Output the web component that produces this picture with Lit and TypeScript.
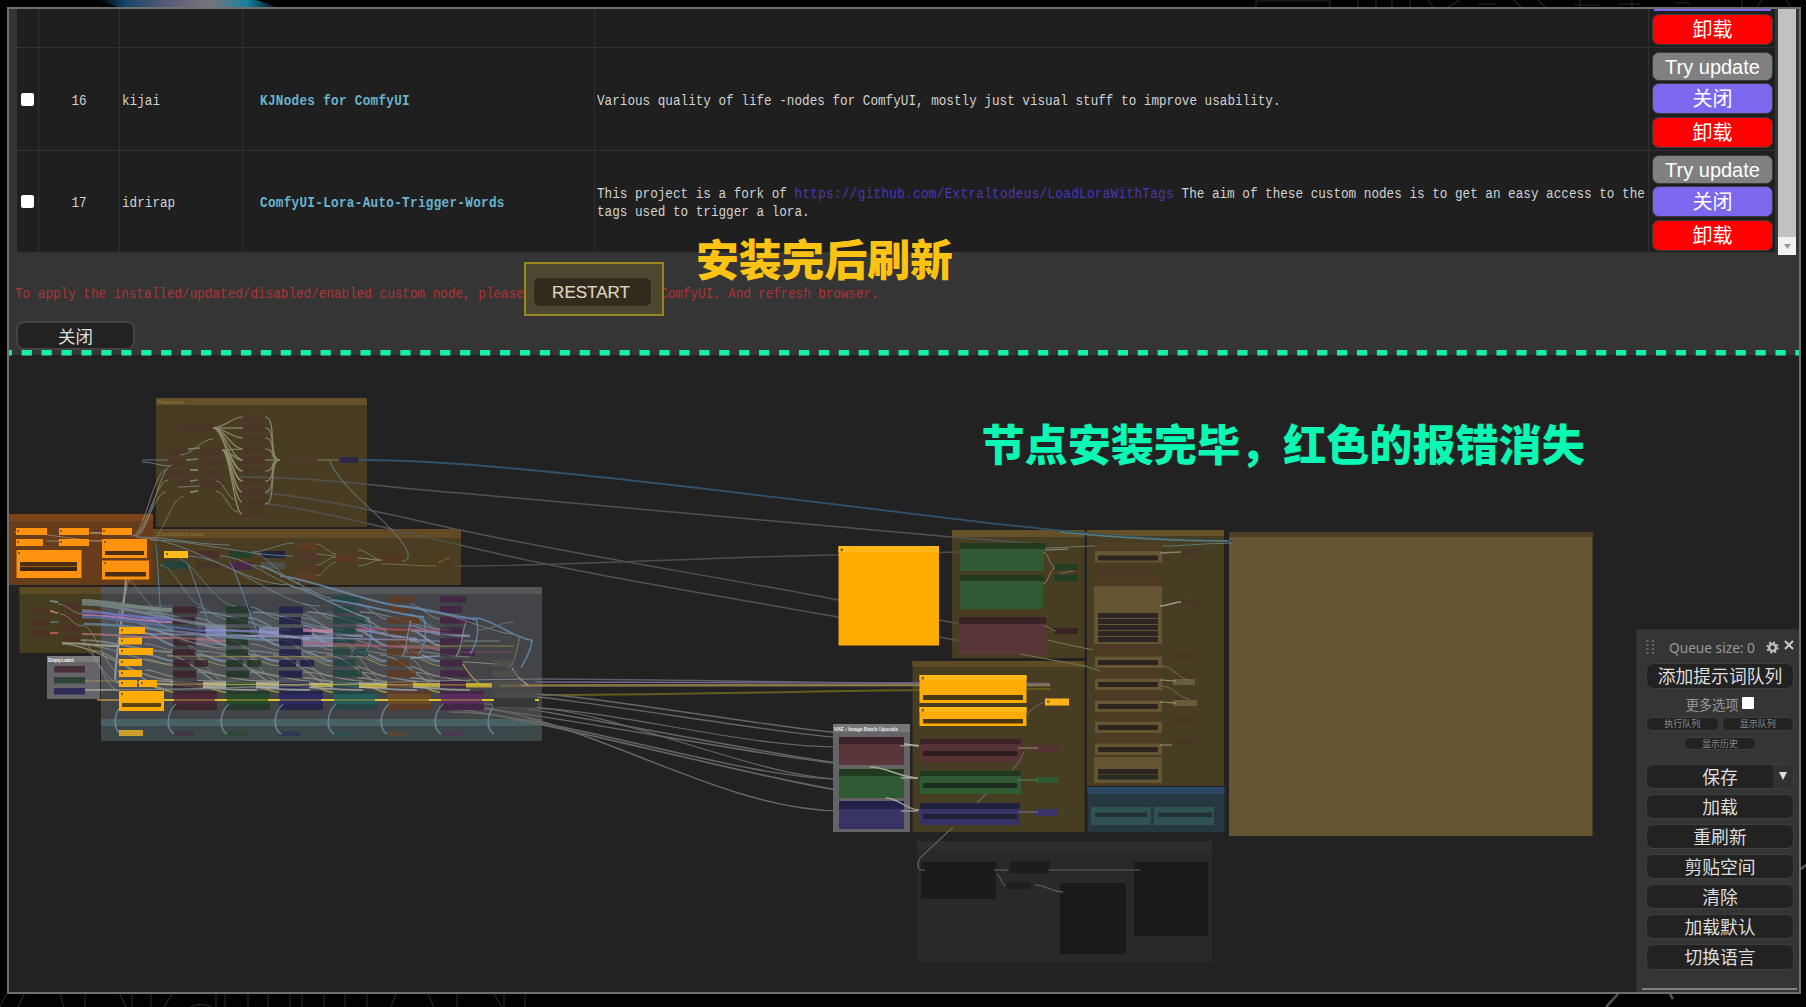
import { LitElement, html, svg, css } from "lit";
import { customElement, property } from "lit/decorators.js";

type Rect = [number, number, number, number, string, number?];
type Link = [number, number, number, number, string, number?, number?];

const rects = (list: Rect[]) =>
  list.map(([x, y, w, h, c, o]) => svg`<rect x=${x} y=${y} width=${w} height=${h} fill=${c} opacity=${o ?? 1} />`);

/* Cubic link with horizontal tangents; the last value is the tangent length as a share of the span. */
const links = (list: Link[]) =>
  list.map(([x1, y1, x2, y2, c, w, k]) => {
    const d = Math.abs(x2 - x1) * (k ?? 0.3) + 2;
    return svg`<path d="M${x1} ${y1}C${x1 + d} ${y1} ${x2 - d} ${y2} ${x2} ${y2}" stroke=${c} stroke-width=${w ?? 1} fill="none" />`;
  });

const paths = (list: [string, string, number][]) =>
  list.map(([d, c, w]) => svg`<path d=${d} stroke=${c} stroke-width=${w} fill="none" />`);

const group = (x: number, y: number, w: number, h: number, fill: string, title: string, th = 8): Rect[] => [
  [x, y, w, h, fill],
  [x, y, w, th, title],
];

const YEL = "#ffab06";
const ORG = "#ff930f";

const leftGroups: Rect[] = [
  ...group(156, 398, 211, 129, "#483d23", "#66502a", 7),
  ...group(153, 529, 308, 56, "#4a3d22", "#644a24", 9),
  ...group(8, 514, 145, 71, "#673c1a", "#7c4519", 7),
  ...group(19.5, 587, 81.5, 66, "#463c20", "#5a4a22", 7),
  ...group(101, 587, 441, 132, "#434447", "#565758", 7),
  ...group(101, 719, 441, 22, "#3b4748", "#4a6163", 7),
  ...group(47, 656, 53, 43, "#66646a", "#7c7b7e", 6),
];

const hiddenNodes: Rect[] = [
  [182, 424, 32, 7, "#4a3527"], [170, 448, 18, 7, "#4a3527"], [202, 448, 22, 7, "#4a3527"],
  [166, 459, 20, 7, "#4a3527"], [202, 459, 22, 7, "#4a3527"], [166, 470, 24, 7, "#4a3527"],
  [202, 470, 20, 7, "#4a3527"], [202, 480, 20, 7, "#4a3527"], [180, 480, 10, 7, "#4a3527"],
  ...Array.from({ length: 10 }, (_, i): Rect => [243, 415 + i * 10.6, 22, 6.5, "#4a3527"]),
  [286, 457, 32, 6, "#4d3a27"], [340, 457, 18, 6, "#2c2648"],
  [197, 551, 22, 7, "#482f28"], [197, 562, 22, 7, "#463426"],
  [164, 561, 24, 8, "#24423d"], [229, 551, 23, 7, "#25402a"], [229, 562, 23, 8, "#4b2945"],
  [261, 551, 24, 7, "#20243f"], [261, 562, 24, 7, "#4f504c"],
  [297, 543, 20, 7, "#5c3a24"], [297, 553, 20, 7, "#53382a"], [297, 563, 20, 7, "#53382a"], [297, 573, 20, 7, "#5c3a24"],
  [336, 555, 24, 7, "#5a3825"], [382, 555, 22, 7, "#553524"], [436, 555, 17, 11, "#50391f"],
  [32, 608, 18, 7, "#4b3424"], [62, 603, 18, 7, "#4d3225"], [32, 619, 18, 7, "#4b3424"], [62, 614, 18, 7, "#4d3225"],
  [32, 630, 18, 7, "#4b3424"], [62, 624, 18, 7, "#4d3225"], [62, 635, 18, 7, "#4b3424"],
];

const columnSpecs: [number, string, string, number][] = [
  [173, "#3d2630", "#4c2639", 1],
  [226, "#253a2b", "#26492a", 1],
  [279, "#25264a", "#2a2a60", 1],
  [333, "#254643", "#245a58", 0],
  [387, "#5a3c29", "#6b4a26", 0],
  [440, "#432845", "#592c5e", 0],
];
const rowWidths = [24, 22, 33, 22, 22, 17, 23, 30];
const columnNodes: Rect[] = columnSpecs.flatMap(([x, c, big, first], ci) => {
  const nodes: Rect[] = [];
  if (!first) nodes.push([x, 596, 26, 6.5, c]);
  rowWidths.forEach((w, i) => {
    const wide = ci > 2 ? [22, 32, 22, 22, 17, 22, 29, 26][i] : w;
    nodes.push([x, (ci > 2 ? 606 : 606.5) + i * 10.7, wide, 7, c]);
  });
  nodes.push([x + 21, ci > 2 ? 649 : 660, 14, 6.8, c], [x, 691, 44, 19, c], [x, 694, 44, 10, big]);
  nodes.push([x, 731, 21, 5, big, 0.5]);
  return nodes;
});

const brightLeft: Rect[] = [
  [16, 528, 31, 7, ORG], [16, 539, 27, 7, ORG], [16.5, 550, 65, 28, ORG], [20, 562, 57, 4.5, "#4c2c12"], [20, 567, 57, 4, "#3c2412"],
  [59, 528, 30, 7, ORG], [59, 539, 30, 7, ORG], [102, 528, 30, 7, ORG],
  [102, 539, 45, 19, ORG], [105, 551, 39, 4, "#4c2c12"], [102, 560.5, 47, 19, ORG], [105, 572, 41, 4.5, "#4c2c12"],
  [164, 551, 24, 7, "#ffbb1c"],
  [119, 627, 26, 7, YEL], [119, 637.5, 23, 7, YEL], [119, 648, 34, 7, YEL], [119, 659, 23, 7, YEL], [119, 670, 23, 7, YEL],
  [119, 680, 18, 7, YEL], [139, 680, 18, 7, YEL], [119, 691, 45, 20, YEL], [122, 703, 39, 4, "#5c4312"],
  [119, 730, 24, 6, "#c9a02c"],
  [54, 666, 31, 6.5, "#46303a"], [54, 677, 31, 6.5, "#2c4438"], [54, 688, 31, 6.5, "#2c2c56"],
  ...[[17, 530], [17, 541], [18, 552], [60, 530], [60, 541], [103, 530], [104, 541], [104, 562], [166, 553], [121, 629], [121, 639.5], [121, 650], [121, 661], [121, 672], [121, 682], [141, 682], [121, 693]].map(
    ([x, y]): Rect => [x, y, 2, 2, "#8a5a10"],
  ),
];

const C = "#8f9c8b";
const leftLinks: Link[] = [
  ...[417, 428, 438, 449, 460, 471, 481].map((y): Link => [213, 428, 243, y, "#a8ad90", 1.2, 0.3]),
  ...[449, 460, 471, 481, 492, 502, 514].map((y): Link => [222, 450, 242, y, "#a8ad90", 1.2, 0.3]),
  ...[417, 428, 438, 449, 460, 471, 481, 492, 504].map((y): Link => [265, y, 280, 460, "#9ea584", 1.2, 0.7]),
  [180, 455, 213, 439, C], [188, 449, 200, 448, C, 1.5], [186, 460, 198, 459, C, 1.5], [190, 470, 198, 470, C, 2], [190, 481, 198, 480, C, 1.5],
  [190, 492, 198, 491, C, 2], [178, 487, 200, 486, C], [216, 481, 236, 500, C], [216, 491, 238, 512, C],
  [142, 460, 168, 460, "#7f9a98"], [142, 462, 170, 466, "#7f9a98"],
  [132, 536, 166, 470, C], [133, 536, 168, 480, C], [134, 536, 166, 492, C], [136, 537, 172, 465, C], [150, 540, 184, 496, "#7e8a62"],
  [318, 460, 338, 460, "#8fa37b"], [316, 544, 336, 554, "#75927f"], [316, 554, 336, 556, "#75927f"],
  [316, 565, 336, 557, "#75927f"], [316, 576, 336, 562, "#75927f"], [358, 550, 382, 560, "#75927f"], [358, 566, 382, 560, "#75927f"],
  [358, 558, 380, 560, "#9aaa7d"], [382, 564, 436, 566, "#8a8059"], [438, 562, 450, 558, "#8a8059"],
  [136, 537, 230, 545, "#79929b"], [150, 540, 293, 556, "#79929b"], [140, 538, 290, 585, "#8395a0"], [252, 552, 294, 543, "#6b939b"],
  [252, 565, 294, 578, "#6b939b"], [252, 553, 300, 583, "#7193a5"], [220, 556, 312, 590, "#8395a0"], [188, 556, 320, 606, "#7193a5"],
  [90, 533, 104, 533, "#c7b5a0", 1.5], [14, 532, 104, 541, "#a59b88"], [46, 541, 104, 541, "#a59b88"],
  [186, 562, 212, 628, "#5f8fb8", 1.2, 0.1], [229, 562, 262, 640, "#5f8fb8", 1.2, 0.1], [155, 541, 162, 620, "#5f8fb8", 1.2, 0.1],
  [160, 565, 202, 605, "#6b8f97"], [170, 555, 236, 606, "#6b8f97"], [120, 575, 160, 610, "#7d8a86"], [128, 575, 118, 625, C], [125, 575, 116, 680, "#b0b4b0", 2],
  [82, 601, 172, 610, "#86998d", 4], [82, 604, 226, 626, "#7c9199", 3], [82, 610, 226, 648, "#8d8d99", 1.4],
  [82, 612, 172, 619, "#7d7be0", 2.6], [82, 615, 172, 622, "#c987d8", 2.2], [82, 617, 226, 632, "#5a77b0", 2.4], [84, 624, 279, 640, "#6d91ae", 2.4],
  [82, 634, 172, 638, "#c27884", 2], [172, 638, 226, 641, "#b8707a", 1.6], [82, 640, 172, 652, "#8b9697", 1.8], [62, 643, 120, 646, "#b8bf9e", 2.2],
  [62, 644, 172, 680, "#a8a494", 1.3], [80, 640, 118, 690, C], [80, 647, 119, 683, C], [82, 625, 119, 672, C], [90, 650, 172, 690, "#9a9a94", 1.2], [82, 645, 172, 664, "#9a9a94", 1.2],
  [50, 601, 58, 602, "#7ea2a8", 2], [50, 611, 58, 613, "#d18a92", 2], [50, 622, 58, 622, "#5b7f7d", 2], [50, 633, 58, 633, "#d06a62", 2],
  [58, 604, 82, 614, C], [60, 614, 82, 626, C],
  [84, 681, 119, 681, "#b0a050"], [84, 690, 119, 690, "#aaa9a4", 2], [97, 700, 119, 700, "#d8b53a", 1.6],
];

/* Upper envelope of the latent links, with the drops into each column. */
const blueLinks: Link[] = [
  [280, 576, 400, 606, "#7297b8", 2.2, 0.15], [400, 606, 476, 619, "#6a9bc8", 2.4, 0.15], [290, 586, 370, 618, "#7d94a4", 1.6, 0.15], [330, 600, 424, 617, "#6a9bc8", 2, 0.15],
  [476, 618, 532, 640, "#6a9bc8", 1.6, 0.2], [260, 566, 330, 598, "#7297a8", 1.4, 0.15], [430, 612, 514, 634, "#8d9aa4", 1, 0.2],
];

/* Bundles that run between neighbouring columns of the sampler bank. */
const bankColors: [string, number][] = [
  ["#76889a", 1.2], ["#6c9494", 1.2], ["#9189c0", 1.8], ["#8f9ec0", 2], ["#9a7e8f", 1.2],
  ["#8fa3bd", 1.6], ["#a89f62", 1.1], ["#9aa08c", 1.2], ["#a7a594", 1.3], ["#bcb64a", 1.5],
];
const bankLinks: Link[] = [145, 197, 250, 303, 357, 410]
  .flatMap((x, i) => bankColors.map(([c, w], j): Link => [x, 607 + j * 8.7 + (j % 3) * 2 - (i > 2 ? 3 : 0), x + 30, 619 + j * 7.8 + (j % 2) * 3, c, w, 0.3]))
  .concat(
    [197, 250, 303, 357, 410].flatMap((x, i): Link[] => [
      [x, 630, x + 60, 636 + (i % 2) * 3, "#969ec6", 2.5], [x, 651, x + 60, 657, "#8c9491", 1.2],
      [x, 672, x + 60, 681, "#aaa69a", 1.2], [x - 80, 682, x + 60, 690, "#b9bcc4", 1.6],
      [x - 20, 640, x + 30, 682, "#8d9a99"], [x - 55, 618, x + 28, 662, "#83989c"],
      [x - 30, 655, x + 40, 690, "#9aa39c", 1.1], [x - 50, 612, x + 40, 630, "#7e9a9c", 1.3],
    ]),
  );
const wash: Rect[] = [
  [101, 605, 72, 85, "#7a8890", 0.22], [197, 612, 136, 78, "#808a98", 0.22], [333, 616, 110, 72, "#808a90", 0.12],
  [205, 626, 21, 10, "#9294cc", 0.6], [258, 627, 21, 10, "#9294cc", 0.6], [196, 637, 30, 8, "#8c90b0", 0.4], [303, 635, 30, 12, "#8fa0c4", 0.6],
  [203, 682, 23, 6, "#c0bda0", 0.7], [256, 682, 23, 6, "#bdba98", 0.7], [311, 683, 22, 4, "#c9b83c", 0.8], [359, 683, 28, 5, "#d3bb34", 0.8], [413, 683, 27, 4.5, "#d3bb34", 0.8], [466, 683, 26, 4.5, "#d8c030", 0.8],
];
const bankRows: Link[] = [
  [205, 630, 279, 632, "#8f8fd6", 2.4], [145, 634, 430, 640, "#9395c4", 1.6], [167, 656, 333, 657, "#a99545", 1.2], [333, 646, 514, 646, "#a99545", 1.2], [110, 690, 542, 679, "#94979c", 1.2],
  [164, 700, 500, 700, "#dfbf2e", 1], [150, 684, 490, 685, "#d2c24a", 1.2], [355, 629, 440, 630, "#a9546a", 2], [303, 630, 333, 631, "#d088a8", 3.4],
  [303, 643, 440, 648, "#b05a70", 1.8], [461, 652, 514, 652, "#8e5266", 1.2], [196, 639, 226, 641, "#b8707a", 1.4],
  [410, 641, 440, 641, "#8f9fb4", 1.2], [410, 658, 440, 656, "#98a8c4", 1.4], [463, 641, 500, 641, "#8f9f98"], [463, 662, 500, 664, "#9aa89c"], [478, 630, 514, 622, "#7f8a80"],
];
const drops = [
  ...[115, 168, 221, 275, 328, 381, 435, 488].map((x): [string, string, number] => [`M${x + 8} 704C${x - 1} 712 ${x - 3} 728 ${x + 6} 734`, "#7297a5", 1.6]),
  ["M368 618C373 630 371 644 366 652", "#6a9bc8", 1.2], ["M423 617C428 630 425 646 419 654", "#6a9bc8", 1.4],
  ["M476 618C480 632 476 646 470 654", "#6a9bc8", 1.4], ["M532 640C531 652 524 662 521 668", "#6a9bc8", 1.6],
  ["M520 636C516 652 516 662 508 668", "#937a78", 1.2], ["M466 622C460 640 462 650 456 656", "#98a0a0", 1.2], ["M411 620C405 640 408 650 402 656", "#98a0a0", 1.2],
  ["M512 668C516 676 520 680 528 685", "#b5a9b5", 1.6], ["M463 664C470 676 474 680 480 684", "#c8b94c", 1.4],
  ["M330 461C340 490 400 528 408 553C409 560 406 561 402 561", "#668782", 1.2],
] as [string, string, number][];

const rightGroups: Rect[] = [
  ...group(952, 530, 132.5, 128, "#473d22", "#665027", 7),
  ...group(1087, 530, 137, 256, "#473d22", "#665027", 6),
  ...group(912.5, 661, 172, 171, "#473d22", "#5e4a24", 6),
  ...group(1087.5, 787, 137, 45, "#27373f", "#2d4863", 7),
  ...group(833, 724, 77, 108, "#646466", "#777779", 8),
  ...group(917, 841, 295, 121, "#292929", "#2d2d2d", 9),
  ...group(1229, 532, 363.5, 304, "#655532", "#4e3d27", 5),
];

const tanRow = (y: number): Rect[] => [
  [1098, y - 9, 62, 8, "#4e3a25"], [1095, y, 67, 11.5, "#655532"], [1098, y + 3.5, 60, 5, "#2b251e"], [1175, y - 4, 18, 6, "#463824"],
];
const rightNodes: Rect[] = [
  [838.5, 546, 100.5, 99.5, "#ffab00"], [838.5, 546, 100.5, 6, "#ffb71a"], [840.5, 548.5, 2.5, 2.5, "#8a6410"],
  [960, 543, 84, 28, "#315a34"], [960, 543, 85, 6, "#20391f"], [960, 575, 83, 34, "#315a34"], [960, 575, 84, 6, "#20391f"],
  [959, 617, 87, 38, "#583637"], [959, 617, 87, 7, "#3a2226"],
  [1054, 564, 24, 6, "#233d22"], [1054, 575, 24, 6, "#233d22"], [1054, 628, 24, 6, "#3a2222"],
  [919.5, 675, 107, 28, YEL], [919.5, 675, 107, 5, "#ffb71a"], [923, 695, 100, 5, "#4a3610"],
  [919.5, 707, 107, 19, YEL], [919.5, 707, 107, 5, "#ffb71a"], [923, 719, 100, 4.5, "#4a3610"], [1045, 698.5, 24, 7, "#ffb41c"],
  [921.5, 677, 2.5, 2.5, "#8a6410"], [921.5, 709, 2.5, 2.5, "#8a6410"], [1047, 700.5, 2.5, 2.5, "#8a6410"],
  [920, 739, 101, 23, "#573335"], [920, 739, 101, 5, "#3a2226"], [923, 751, 94, 5, "#2a1c1f"],
  [920, 771, 101, 23, "#305a34"], [920, 771, 101, 5, "#20391f"], [923, 783, 94, 5, "#1c2c1e"],
  [920, 803, 100, 22, "#353266"], [920, 803, 100, 6, "#21203f"], [923, 814, 94, 5, "#1f1e33"],
  [1036, 745, 22, 7, "#553033"], [1036, 777, 22, 6, "#2d5a33"], [1036, 809, 22, 7, "#393468"],
  [839, 737, 65, 28, "#5a3539"], [839, 737, 65, 7, "#3a2228"], [839, 769, 65, 29, "#305a34"], [839, 769, 65, 7, "#20391f"],
  [839, 801, 65, 28, "#383463"], [839, 801, 65, 8, "#23214a"],
  [1098, 543, 62, 7, "#513c26"], [1095, 551, 67, 11.5, "#655532"], [1098, 555.5, 60, 5, "#2b251e"],
  [1100, 568, 52, 8, "#4d3826"], [1095, 577, 67, 9, "#4e3a25"], [1094, 586, 68, 58, "#655532"],
  ...[0, 1, 2, 3, 4].map((i): Rect => [1098, 613 + i * 6, 60, 5, "#2b2622"]),
  [1098, 645, 62, 8, "#4e3a25"],
  ...tanRow(656.5), ...tanRow(678.5), ...tanRow(700.5), ...tanRow(721.5), ...tanRow(743.5),
  [1094, 757, 68, 26, "#655532"], [1098, 769, 60, 5, "#2a2520"], [1098, 774.5, 60, 5, "#262c20"],
  [1173, 679, 22, 6, "#6a5b3b"], [1173, 700, 24, 6, "#6a5b3b"], [1181, 549, 18, 6, "#463824"], [1181, 599, 18, 6, "#463824"],
  [1091, 807, 60, 18, "#2e5352"], [1095, 812.5, 52, 4.5, "#223033"], [1154, 807, 60, 18, "#2e5352"], [1158, 812.5, 54, 4.5, "#223033"],
  [921, 862, 75, 37, "#1b1b1b"], [1010, 861, 40, 12, "#1d1d1d"], [1006, 882, 25, 7, "#1f1f1f"],
  [1060, 883, 66, 71, "#1a1a1a"], [1134, 862, 74, 74, "#1a1a1a"],
];

const G = "#52534f";
const backPaths: [string, string, number][] = [
  ["M240 477C320 477 380 487 460 493C620 506 780 523 952 537L1040 544", G, 1.5],
  ["M262 493C320 497 400 517 460 530C585 557 710 575 838 600L960 624", G, 1.5],
  ["M262 503C320 510 400 532 460 545C585 575 710 594 838 617L960 641", G, 1.5],
  ["M454 566C580 566 700 557 838 555L960 552", "#4c4f49", 1.4],
];
const W = "#666762";
const backLinks: Link[] = [
  [542, 679, 920, 683, "#5d5b68", 1.6], [500, 685.5, 1050, 685, "#8d7547", 2.4], [542, 695, 1050, 689, "#645b1e", 2], [535, 682, 1050, 683.5, "#6d6488", 1.6],
  [535, 694, 860, 734, W, 1.3, 0.15], [500, 694, 860, 739, W, 1.3, 0.15], [500, 706, 841, 747, W, 1.2, 0.3], [470, 703, 880, 767, W, 1.4, 0.15],
  [450, 706, 870, 766, W, 1.4, 0.15], [530, 708, 841, 779, W, 1.2, 0.25], [440, 708, 880, 795, W, 1.6, 0.15], [450, 712, 841, 779, W, 1.4, 0.25],
  [440, 704, 842, 811, W, 1.4, 0.32],
];
const rightLinks: Link[] = [
  [904, 744, 919, 746, "#b5b5b0", 1.4], [900, 746, 918, 745, "#a5a5a0"], [870, 767, 918, 778, "#a4a898", 1.4], [901, 778, 918, 778, "#a4a898", 1.4],
  [886, 798, 919, 810, "#a4a898", 1.4], [901, 811, 918, 811, "#9b98a8", 1.4],
  [1043, 552, 1055, 567, "#9a7a66"], [1043, 584, 1055, 568, "#9a7a66"], [1044, 626, 1056, 631, "#7c6a5c"], [1060, 573, 1074, 571, "#6a7a56"],
  [1045, 548, 1095, 546, "#6d7a62", 1.2], [1045, 550, 1068, 549, "#8d907d", 1.2], [1162, 546, 1232, 543, "#5d7a72", 1.2],
  [1018, 748, 1038, 748, "#a98a8a"], [1018, 780, 1038, 780, "#5a8a60"], [1018, 812, 1038, 812, "#7a76a0"],
  [1160, 553, 1181, 552, "#8a8268", 1.4], [1160, 606, 1181, 602, "#a09a8a", 1.4], [1162, 666, 1190, 680, "#786d4c"], [1160, 680, 1176, 681, "#a09a70"],
  [1162, 686, 1190, 699, "#786d4c"], [1160, 702, 1176, 703, "#a09a70"], [1160, 745, 1172, 745, "#a09a70"],
  [994, 870, 1008, 870, "#555", 1.4], [1048, 870, 1140, 870, "#4c4c4c", 1.6], [996, 874, 1006, 886, "#555", 1.2], [1035, 885, 1063, 892, "#555", 1.4],
];

interface NodeRow { id: string; author: string; name: string; }

@customElement("action-stack")
export class ActionStack extends LitElement {
  static styles = css`
    :host { display: flex; flex-direction: column; gap: 2.6px; padding: 3.5px 2px 0 3px; }
    .btn { box-sizing: border-box; flex: none; height: 31px; border-radius: 7px; border: 1px solid #3b3b3b; color: #fff; font: 20px/30px "Liberation Sans", "Noto Sans CJK SC", sans-serif; text-align: center; white-space: nowrap; }
    .update { background: #808080; height: 29px; line-height: 28px; }
    .off { background: #7b68ee; }
    .remove { background: #ff0000; }
    .edge { flex: none; height: 2px; margin: 0 2px; background: #7b68ee; }
    :host([tail]) { padding-top: 0; }
  `;
  @property({ type: Boolean, reflect: true }) tail = false;
  render() {
    return this.tail
      ? html`<div class="edge"></div><div class="btn remove">卸载</div>`
      : html`<div class="btn update">Try update</div><div class="btn off">关闭</div><div class="btn remove">卸载</div>`;
  }
}

@customElement("queue-menu")
export class QueueMenu extends LitElement {
  static styles = css`
    :host { display: flex; flex-direction: column; box-sizing: border-box; width: 163px; height: 363px; padding: 7px 5px 0 9px; background: #353535; border-left: 1px solid #2d2d2d; border-top: 1px solid #303030; font-family: "Noto Sans", "Noto Sans CJK SC", sans-serif; color: #ddd; }
    .head { display: flex; align-items: center; height: 20px; color: #999; font-size: 13.7px; }
    .grip { width: 9px; height: 14px; margin-right: 14px; }
    .label { flex: 1; white-space: nowrap; }
    .gear { width: 13px; height: 13px; margin-right: 5px; }
    .close { width: 10px; height: 10px; margin-bottom: 4px; }
    .btn { box-sizing: border-box; height: 25.5px; background: #222; border: 1px solid #3e3e3e; border-radius: 7px; font-size: 17.8px; line-height: 24px; text-align: center; white-space: nowrap; overflow: hidden; }
    .queue { margin-top: 6px; }
    .more { display: flex; justify-content: center; align-items: center; gap: 4px; height: 20px; margin-top: 5.5px; color: #999; font-size: 13.2px; }
    .box { width: 12px; height: 12px; background: #fff; border-radius: 1px; margin-top: -3px; }
    .pair { display: flex; justify-content: space-between; margin-top: 3px; }
    .small { box-sizing: border-box; width: 72.5px; height: 13.5px; border: 1px solid #3e3e3e; border-radius: 6px; background: #222; color: #8a8a8a; font-size: 9px; line-height: 11px; text-align: center; }
    .history { align-self: center; margin-top: 6px; }
    .list { display: flex; flex-direction: column; gap: 4.6px; margin-top: 13.5px; }
    .save { position: relative; }
    .drop { position: absolute; right: 0; top: 0; width: 20px; height: 100%; background: #313131; }
    .arrow { display: block; width: 8px; height: 8px; margin: 7px 0 0 6px; }
    .rule { height: 2px; margin: 18.5px -3px 0 -4px; background: #808080; }
  `;
  render() {
    return html`
      <div class="head">
        <svg class="grip" viewBox="0 0 9 14" fill="#777">${[1, 5, 9, 13].map((y) => svg`<rect x="0.5" y=${y - 0.8} width="2" height="1.6"/><rect x="6" y=${y - 0.8} width="2" height="1.6"/>`)}</svg>
        <span class="label">Queue size: 0</span>
        <svg class="gear" viewBox="0 0 13 13" fill="none" stroke="#c4c4c4">
          <circle cx="6.5" cy="6.5" r="3.4" stroke-width="2.2"/>
          <circle cx="6.5" cy="6.5" r="5.2" stroke-width="1.8" stroke-dasharray="2.05 2.03"/>
        </svg>
        <svg class="close" viewBox="0 0 10 10" stroke="#ccc" stroke-width="1.9"><path d="M1 1L9 9M9 1L1 9"/></svg>
      </div>
      <div class="btn queue">添加提示词队列</div>
      <div class="more">更多选项<span class="box"></span></div>
      <div class="pair"><div class="small">执行队列</div><div class="small">显示队列</div></div>
      <div class="small history">显示历史</div>
      <div class="list">
        <div class="btn save">保存<span class="drop"><svg class="arrow" viewBox="0 0 8 8"><path d="M0 0H8L4 8Z" fill="#ddd"/></svg></span></div>
        ${["加载", "重刷新", "剪贴空间", "清除", "加载默认", "切换语言"].map((t) => html`<div class="btn">${t}</div>`)}
      </div>
      <div class="rule"></div>
    `;
  }
}

@customElement("node-canvas")
export class NodeCanvas extends LitElement {
  static styles = css`
    :host { display: block; width: 1790px; height: 637px; }
    .graph { display: block; width: 100%; height: 100%; }
    .title { font: bold 5px "Liberation Sans", sans-serif; fill: #e6e6e6; }
    .faint { font: 5px "Liberation Sans", sans-serif; fill: #8f7a45; }
  `;
  render() {
    return html`<svg class="graph" viewBox="9 355 1790 637">
      ${rects(leftGroups)}
      ${rects(rightGroups)}
      ${paths(backPaths)}
      ${links(backLinks)}
      ${rects(hiddenNodes)}
      ${rects(wash)}
      <g opacity="0.6">${links(bankLinks)}</g>
      ${rects(columnNodes)}
      <g opacity="0.22">${links(bankLinks)}</g>
      <g opacity="0.7">${links(leftLinks)}${links(blueLinks)}${links(bankRows)}${paths(drops)}</g>
      ${rects([[493, 660, 22, 7, "#55554c", 0.6], [493, 670, 26, 7, "#55554c", 0.6], [493, 681, 28, 7, "#55554c", 0.6], [493, 691, 44, 18, "#4a4a4a"], [493, 698, 44, 9, "#363636"]])}
      ${[173, 226, 279, 333, 387, 440, 493].map((x) => svg`<path d="M${x - 9} 700h10M${x + 42} 700h4" stroke="#dfc02e" stroke-width="1.8"/>`)}
      ${rects(brightLeft)}
      ${rects(rightNodes)}
      <path d="M359 460C430 460 500 467 560 473C640 480 880 510 980 522C1080 533 1150 541 1232 541" stroke="#32526c" stroke-width="1.8" fill="none"/>
      <path d="M1060 532C1120 538 1170 541 1228 541" stroke="#5a7a78" stroke-width="1.6" fill="none"/>
      ${links(rightLinks)}
      <path d="M1026 716C1032 708 1038 704 1045 702M1024 752C1020 762 1016 766 1012 770M987 793L977 803M953 827L920 858Q916 866 920 870H925" fill="none" stroke="#6a6450" stroke-width="1.1"/>
      <path d="M1047 640L1093 650M1020 654L1085 666L1100 671" fill="none" stroke="#7a7452" stroke-width="1.1"/>
      <text class="title" x="48" y="661.5" textLength="26">Empty Latent</text>
      <text class="title" x="834" y="730.5" textLength="64">VAE - Image Batch Upscale</text>
      <text class="faint" x="158" y="404" textLength="26">Parameters</text>
      <text class="faint" x="158" y="535.5" textLength="46">Conditioning setup</text>
    </svg>`;
  }
}

@customElement("app-root")
export class AppRoot extends LitElement {
  static styles = css`
    :host { display: block; width: 1806px; height: 1007px; overflow: hidden; background: #020202; }
    .stage { position: relative; box-sizing: border-box; width: 1806px; height: 1007px; padding: 7px 0 0 7px; overflow: hidden; }
    .backdrop { position: absolute; inset: 0; width: 1806px; height: 1007px; }
    .frame { position: relative; box-sizing: border-box; width: 1794px; height: 987px; border: 2px solid #707070; background: #222; display: flex; flex-direction: column; overflow: hidden; }
    .dialog { height: 346px; flex: none; background: #353535; display: flex; flex-direction: column; }
    .scroller { display: flex; height: 246px; padding-left: 8px; flex: none; }
    .table { display: grid; grid-template-columns: 22px 81px 123px 352px 1054px 126px; grid-template-rows: 39px 103px 102px; width: 1758px; height: 244px; background: #1f1f1f; overflow: hidden; }
    .cell { box-sizing: border-box; display: flex; align-items: center; border-right: 1px solid #303030; border-bottom: 1px solid #303030; min-width: 0; overflow: hidden; padding-top: 3px; }
    .cell.last { border-right: none; align-items: stretch; padding-top: 0; }
    .cell.last action-stack { flex: 1; }
    .mono { display: inline-block; font: 12.67px/15.2px "Liberation Mono", "Noto Sans CJK SC", monospace; color: #d2d2d2; white-space: nowrap; transform: scaleY(1.18); }
    .check { width: 13px; height: 13px; margin-left: 4px; margin-top: -3px; background: #fff; border-radius: 2px; }
    .id { justify-content: center; }
    .author { padding-left: 2px; }
    .name { padding-left: 17px; }
    .name .mono { color: #69b3cf; font-weight: bold; letter-spacing: 0.3px; }
    .desc { padding-left: 2px; }
    .url { color: #4a38b8; letter-spacing: 0.31px; }
    .bar { display: flex; flex-direction: column; justify-content: flex-end; width: 18px; height: 246px; margin-left: 3px; background: #c1c1c1; }
    .down { height: 18px; background: #f1f1f1; display: flex; align-items: center; justify-content: center; }
    .caret { width: 7px; height: 5px; }
    .notice { display: flex; align-items: center; height: 54px; margin-top: 7px; padding-left: 6px; }
    .warn { color: #b03434; flex: none; margin-top: 10px; }
    .before { width: 509px; }
    .after { margin-left: -3.5px; letter-spacing: -0.08px; }
    .mark { position: relative; z-index: 1; flex: none; box-sizing: border-box; width: 140px; height: 54px; border: 2px solid #9a861f; background: #4c472f; display: flex; align-items: center; justify-content: center; padding: 6px 4px 0 0; }
    .restart { box-sizing: border-box; width: 119px; height: 30px; border: 1px solid #544b2b; border-radius: 7px; background: #302b1c; color: #ddd3bd; font: 17px/29px "Liberation Sans", sans-serif; text-align: center; padding-right: 2px; -webkit-text-stroke: 0.2px #ddd3bd; }
    .shut { box-sizing: border-box; width: 119px; height: 29px; margin: 5px 0 0 7px; border: 2px solid #434343; border-radius: 8px; background: #222; color: #ddd; font: 17.5px/25px "Noto Sans CJK SC", sans-serif; text-align: center; }
    .dashes { position: absolute; left: -2px; top: 340px; width: 1794px; height: 8px; }
    .note { position: absolute; white-space: nowrap; font-family: "Noto Sans CJK SC", sans-serif; font-weight: 900; line-height: 50px; }
    .yellow { left: 687px; top: 223px; font-size: 42.8px; color: #fdc314; }
    .green { left: 972.5px; top: 407.5px; font-size: 43.1px; color: #0af7b4; }
    .menu { position: absolute; left: 1627px; top: 620px; }
  `;

  private rows: NodeRow[] = [
    { id: "16", author: "kijai", name: "KJNodes for ComfyUI" },
    { id: "17", author: "idrirap", name: "ComfyUI-Lora-Auto-Trigger-Words" },
  ];

  private description(id: string) {
    return id === "16"
      ? html`<span class="mono">Various quality of life -nodes for ComfyUI, mostly just visual stuff to improve usability.</span>`
      : html`<span class="mono">This project is a fork of <span class="url">https://github.com/Extraltodeus/LoadLoraWithTags</span> The aim of these custom nodes is to get an easy access to the<br />tags used to trigger a lora.</span>`;
  }

  render() {
    return html`<div class="stage">
      <svg class="backdrop" viewBox="0 0 1806 1007">
        <defs>
          <linearGradient id="glow" x1="0" x2="1">
            <stop offset="0" stop-color="#020202"/><stop offset="0.15" stop-color="#16456a"/><stop offset="0.38" stop-color="#5a5a78"/>
            <stop offset="0.62" stop-color="#77767e"/><stop offset="0.82" stop-color="#1681a0"/><stop offset="1" stop-color="#020202"/>
          </linearGradient>
        </defs>
        <path d="M98 0H256L280 8H120Z" fill="url(#glow)"/>
        <path d="M1256 8V1H1330V8M1358 0V8M1376 0V8M1392 0V8M1410 0V8M1428 0L1434 8M1460 0L1446 8M1478 4H1496M1514 0L1522 8M1538 0L1546 8M1574 5H1600M1580 0V8M1618 4H1640M1632 0V8M1676 3H1690M1742 0V8M1762 0L1756 8M1786 0L1792 8" fill="none" stroke="#262626" stroke-width="1.2"/>
        <path d="M0 1007L6 994M18 1007L24 994M60 994L64 1007M85 994V1007M120 994L126 1007M132 994V1007M151 994V1007M164 1007L172 994M190 1007Q200 1002 212 1007M216 994V1007M225 994V1007M248 994V1007M268 994V1007M290 994V1007M302 994V1007M324 994V1007M345 994V1007M367 994V1007M391 1007L396 994M428 994L434 1007M457 994V1007M494 994L502 1007M504 994V1007M525 994V1007" fill="none" stroke="#242424" stroke-width="1.3"/>
        <path d="M1606 1007L1618 994M1670 994L1673 999M1801 869L1806 865" stroke="#555" stroke-width="2.5"/>
      </svg>
      <div class="frame">
        <div class="dialog">
          <div class="scroller">
            <div class="table">
              ${[0, 1, 2, 3, 4].map(() => html`<div class="cell"></div>`)}
              <div class="cell last"><action-stack tail></action-stack></div>
              ${this.rows.map((r) => html`
                <div class="cell"><span class="check"></span></div>
                <div class="cell id"><span class="mono">${r.id}</span></div>
                <div class="cell author"><span class="mono">${r.author}</span></div>
                <div class="cell name"><span class="mono">${r.name}</span></div>
                <div class="cell desc">${this.description(r.id)}</div>
                <div class="cell last"><action-stack></action-stack></div>
              `)}
            </div>
            <div class="bar"><div class="down"><svg class="caret" viewBox="0 0 7 5"><path d="M0 0H7L3.5 5Z" fill="#999"/></svg></div></div>
          </div>
          <div class="notice">
            <span class="mono warn before">To apply the installed/updated/disabled/enabled custom node, please</span>
            <div class="mark"><div class="restart">RESTART</div></div>
            <span class="mono warn after">ComfyUI. And refresh browser.</span>
          </div>
          <div class="shut">关闭</div>
        </div>
        <node-canvas></node-canvas>
        <svg class="dashes" viewBox="7 349 1794 8"><path d="M1.7 352.8H1801" stroke="#14efb0" stroke-width="5.4" stroke-dasharray="10.2 9.73"/></svg>
        <div class="note yellow">安装完后刷新</div>
        <div class="note green">节点安装完毕，红色的报错消失</div>
        <queue-menu class="menu"></queue-menu>
      </div>
    </div>`;
  }
}
